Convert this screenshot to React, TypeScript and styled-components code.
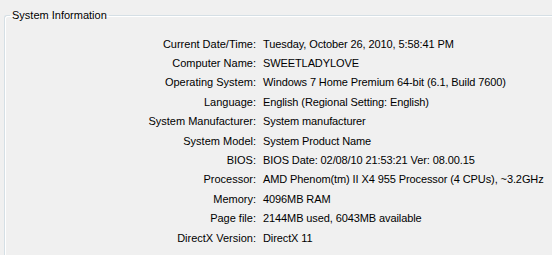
import React from "react";
import styled, { createGlobalStyle } from "styled-components";

const GlobalStyle = createGlobalStyle`
	html, body {
		margin: 0;
		padding: 0;
		background: #f0f0f0;
		overflow: hidden;
	}
	body {
		width: 552px;
		height: 255px;
		font-family: "Liberation Sans", Tahoma, sans-serif;
		font-size: 11px;
		color: #000;
	}
`;

const rows: [string, string][] = [
	["Current Date/Time:", "Tuesday, October 26, 2010, 5:58:41 PM"],
	["Computer Name:", "SWEETLADYLOVE"],
	["Operating System:", "Windows 7 Home Premium 64-bit (6.1, Build 7600)"],
	["Language:", "English (Regional Setting: English)"],
	["System Manufacturer:", "System manufacturer"],
	["System Model:", "System Product Name"],
	["BIOS:", "BIOS Date: 02/08/10 21:53:21 Ver: 08.00.15"],
	["Processor:", "AMD Phenom(tm) II X4 955 Processor (4 CPUs), ~3.2GHz"],
	["Memory:", "4096MB RAM"],
	["Page file:", "2144MB used, 6043MB available"],
	["DirectX Version:", "DirectX 11"],
];

const App = () => {
	return (
		<>
			<GlobalStyle />
			<Group>
				<Title>System Information</Title>
				<InfoGrid>
					{rows.map(([label, value]) => (
						<React.Fragment key={label}>
							<Label>{label}</Label>
							<Value>{value}</Value>
						</React.Fragment>
					))}
				</InfoGrid>
			</Group>
		</>
	);
};

// right and bottom edges of the group box sit outside the window
const Group = styled.fieldset`
	margin: 9px 0 0 4px;
	padding: 12px 0 0 0;
	width: 548px;
	height: 246px;
	box-sizing: border-box;
	border: 1px solid #d5dfe5;
	border-right: none;
	border-bottom: none;
	border-radius: 3px 0 0 0;
	box-shadow: inset 1px 1px 0 #ffffff;
	min-width: 0;
`;

const Title = styled.legend`
	margin-left: 5px;
	padding: 0 2px;
	line-height: 13px;
`;

const InfoGrid = styled.div`
	display: grid;
	grid-template-columns: 251px 1fr;
	grid-auto-rows: 19.4px;
	column-gap: 7px;
	align-items: center;
`;

const Label = styled.div`
	text-align: right;
	white-space: nowrap;
`;

const Value = styled.div`
	white-space: nowrap;
	letter-spacing: -0.1px;
`;

export default App;
